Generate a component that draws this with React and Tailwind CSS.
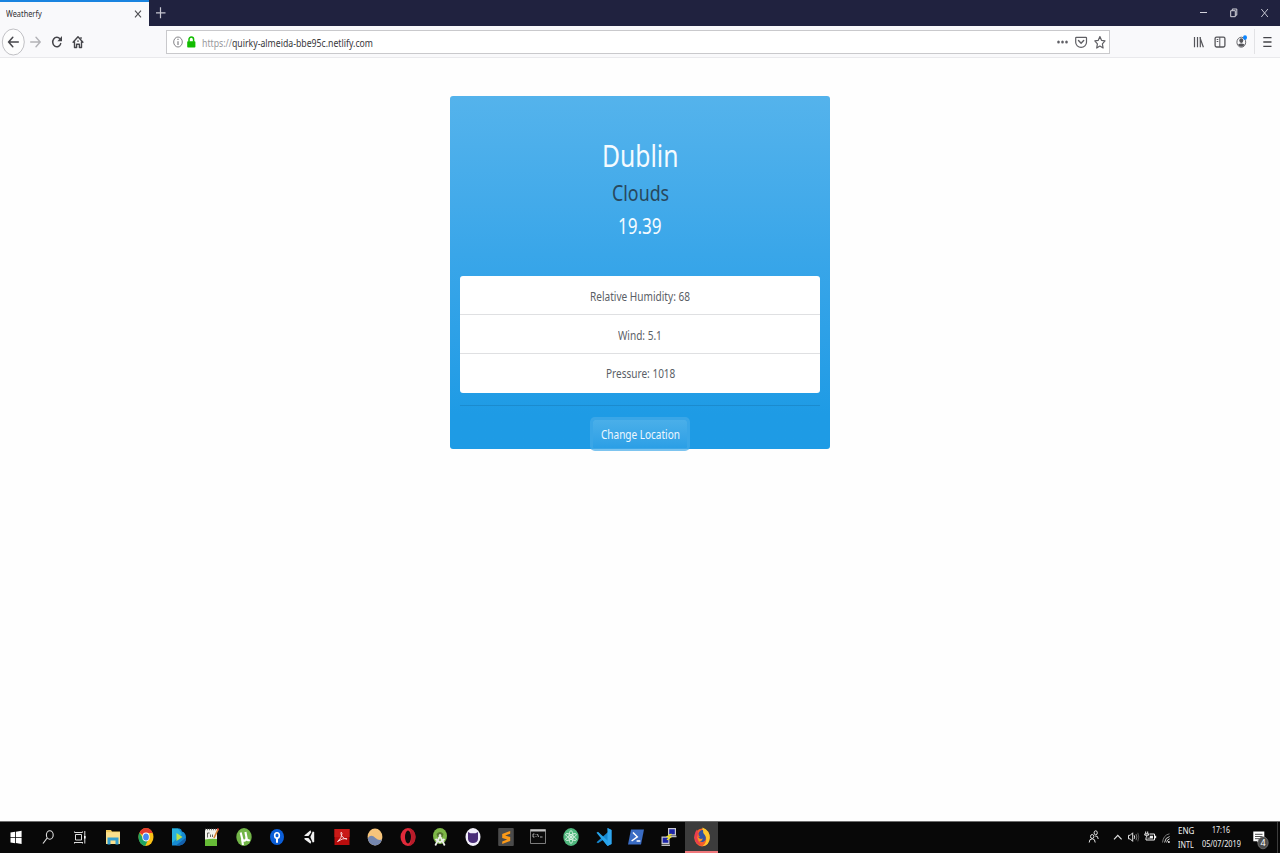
import { useLayoutEffect, useRef, useState } from "react";

/* Single line of text condensed horizontally to a given width. */
function Fit({ w, className = "", children }) {
  const ref = useRef(null);
  const [scale, setScale] = useState(1);
  useLayoutEffect(() => {
    setScale(w / ref.current.offsetWidth);
  }, [w]);
  return (
    <span className={"flex justify-start whitespace-nowrap " + className} style={{ width: w }}>
      <span ref={ref} className="inline-block shrink-0 origin-left" style={{ transform: `scaleX(${scale})` }}>
        {children}
      </span>
    </span>
  );
}

/* Chrome icon: 16x20 by default */
function Ico({ w = 16, h = 20, className = "", children }) {
  return (
    <svg width={w} height={h} viewBox={`0 0 ${w} ${h}`} fill="none" className={"block shrink-0 " + className}>
      {children}
    </svg>
  );
}

function TabStrip() {
  return (
    <div className="flex h-[26px] bg-[#20223f] text-white">
      <div className="flex w-[149px] items-center justify-between border-t-2 border-[#1a84e0] bg-[#f9f9fb] pl-[6px] pr-[7px]">
        <Fit w={36} className="text-[9px] leading-[22px] text-[#303034]">Weatherfy</Fit>
        <Ico w={8} h={10}>
          <path d="M1 1.6 7 8.4M7 1.6 1 8.4" stroke="#4c4c50" strokeWidth="1.1" />
        </Ico>
      </div>
      <Ico w={22} h={26}>
        <path d="M11.5 7.300v11M7 12.800h9.500" stroke="#c8c8d2" strokeWidth="1.2" />
      </Ico>
      <div className="flex-1" />
      <Ico w={92} h={26}>
        <path d="M12 12.5h7" stroke="#d4d4dc" strokeWidth="1" />
        <path d="M42.7 10.7h4.6v6h-4.6zM44.3 10.5V9h4.5v6.2h-1.4" stroke="#d4d4dc" strokeWidth="1" />
        <path d="m73.3 9 6.6 8M79.9 9l-6.6 8" stroke="#d4d4dc" strokeWidth=".9" />
      </Ico>
    </div>
  );
}

function Toolbar() {
  return (
    <div className="flex h-8 items-center border-b border-[#e9e9ec] bg-[#f9f9fb]">
      <Ico w={166} h={31}>
        <ellipse cx="13.3" cy="16" rx="11" ry="13" fill="#fdfdfd" stroke="#b9b9bd" strokeWidth=".9" />
        <path d="M18.3 16H8.8M12.8 11.2 8.6 16l4.2 4.8" stroke="#45454a" strokeWidth="1.5" strokeLinecap="round" />
        <path d="M30.7 16h9M36 11.2l4.2 4.8-4.2 4.8" stroke="#b2b2b6" strokeWidth="1.4" strokeLinecap="round" />
        <path d="M60 13a4.1 4.8 0 1 0 .7 4.6" stroke="#45454a" strokeWidth="1.5" strokeLinecap="round" />
        <path d="M62 10v5.3h-4.6z" fill="#45454a" />
        <path d="m73.1 16.3 4.9-5.6 4.9 5.6M74.5 15.5v6h2.1v-3.3h2.8v3.3h2.1v-6" stroke="#45454a" strokeWidth="1.4" strokeLinejoin="round" strokeLinecap="round" />
        <path d="M81 11v2M78 14.2v1.8" stroke="#45454a" strokeWidth="1.2" />
      </Ico>
      <div className="mt-px flex h-6 w-[944px] items-center border border-[#c9c9cc] bg-white">
        <Ico w={35} h={22}>
          <ellipse cx="11" cy="11" rx="4.3" ry="5" stroke="#76767a" strokeWidth=".9" />
          <path d="M11 10.2v3.7M11 7.8v1.3" stroke="#76767a" strokeWidth="1.1" />
          <rect x="20.2" y="10.2" width="8.2" height="6.3" rx=".8" fill="#12bc00" />
          <path d="M22 10.8V8.6a2.3 2.5 0 0 1 4.6 0v2.2" stroke="#12bc00" strokeWidth="1.5" />
        </Ico>
        <Fit w={171} className="mt-[2px] text-[11px] leading-[20px] text-[#37373b]">
          <span className="text-[#97979b]">https://</span>quirky-almeida-bbe95c.netlify.com
        </Fit>
        <div className="flex-1" />
        <Ico w={54} h={22}>
          <g fill="#5f5f64">
            <ellipse cx="3.500" cy="11" rx="1.3" ry="1.5" />
            <ellipse cx="7.500" cy="11" rx="1.3" ry="1.5" />
            <ellipse cx="11.500" cy="11" rx="1.3" ry="1.5" />
          </g>
          <path d="M21.400 6.3h9.4a.7.7 0 0 1 .7.7v4.2a5.4 5.2 0 0 1-10.8 0V7a.7.7 0 0 1 .7-.7Z" stroke="#5f5f64" strokeWidth="1.2" />
          <path d="m23.500 9.500 2.6 2.8 2.6-2.8" stroke="#5f5f64" strokeWidth="1.4" strokeLinecap="round" />
          <path d="m44.900 5.6 1.6 3.7 3.5.6-2.6 2.9.7 4.2-3.2-2-3.2 2 .7-4.2-2.6-2.9 3.5-.6z" stroke="#5f5f64" strokeWidth="1.2" strokeLinejoin="round" />
        </Ico>
      </div>
      <div className="flex-1" />
      <Ico w={90} h={31}>
        <path d="M4.5 11v10.3M7.5 11v10.3M10.3 11v10.3M9.8 11.3l3.6 10" stroke="#55555a" strokeWidth="1.2" />
        <rect x="25.1" y="11.2" width="9.8" height="9.8" rx="1.4" stroke="#55555a" strokeWidth="1.3" />
        <path d="M29.8 11v10M26.7 13.5h1.6M26.7 15.5h1.6" stroke="#55555a" strokeWidth="1" />
        <ellipse cx="51.3" cy="16.2" rx="4.4" ry="5" stroke="#6a6a6e" strokeWidth="1" />
        <ellipse cx="51.3" cy="14.6" rx="2" ry="2.3" fill="#55555a" />
        <path d="M48 18.4q3.3-2 6.6 0-1 2.4-3.3 2.4T48 18.4Z" fill="#55555a" />
        <ellipse cx="55" cy="11.6" rx="2" ry="2.3" fill="#0a84ff" />
        <path d="M64.5 3v25" stroke="#e2e2e5" />
        <path d="M73.3 11.7h8.2M73.3 16h8.2M73.3 20.3h8.2" stroke="#45454a" strokeWidth="1.3" />
      </Ico>
    </div>
  );
}

function WeatherCard() {
  return (
    <div className="mt-[38px] flex h-[353px] w-[380px] flex-col items-center rounded-[3px] bg-linear-to-b from-[#54b3ec] via-[#39a6e9] via-45% to-[#1e9be5] to-90% px-[10px]">
      <Fit w={76} className="mt-[40px] text-[30.500px] leading-[38px] text-[#f4fbff]">Dublin</Fit>
      <Fit w={57} className="mt-[4px] text-[22.5px] leading-[30px] text-[#28485d]">Clouds</Fit>
      <Fit w={44} className="mt-[3px] text-[22.5px] leading-[30px] text-[#f4fbff]">19.39</Fit>
      <div className="mt-[35px] flex w-full flex-col rounded-[3px] bg-white text-[12.8px] leading-[38px] text-[#5a6066]">
        <div className="flex h-[39px] justify-center border-b border-[#dfe0e2] pt-px"><Fit w={100}>Relative Humidity: 68</Fit></div>
        <div className="flex h-[39px] justify-center border-b border-[#dfe0e2] pt-px"><Fit w={44}>Wind: 5.1</Fit></div>
        <div className="flex h-[38.500px] justify-center"><Fit w={69}>Pressure: 1018</Fit></div>
      </div>
      <div className="mt-[12.500px] h-px w-full shrink-0 bg-[#1b8bce]" />
      <button className="mt-[14px] flex h-[28px] w-[94px] shrink-0 items-center justify-center rounded-[2px] bg-linear-to-b from-[#4aafe9] to-[#2b9fe6] ring-3 ring-[#46abe8]/70">
        <Fit w={79} className="-mt-px text-[12.8px] leading-[20px] text-[#eef8ff]">Change Location</Fit>
      </button>
    </div>
  );
}

const APPS = [
  <g key="explorer">
    <path d="M1 3h5l1 1.5h8V17H1z" fill="#f0c95c" />
    <path d="M1 5.200h14V17H1z" fill="#fbe08c" />
    <path d="M2.5 17.500v-7h11v7h-3V13.500h-5v4z" fill="#35a0d0" />
  </g>,
  <g key="chrome">
    <ellipse cx="8" cy="10" rx="7.5" ry="9" fill="#fbc116" />
    <path d="M8 10 1.4 5.7A7.5 9 0 0 1 14.8 6H8z" fill="#e33b2e" />
    <path d="M1.4 5.7A7.5 9 0 0 0 7.2 19L10.4 12 8 10 5 11z" fill="#1da462" />
    <ellipse cx="8" cy="10" rx="3.7" ry="4.4" fill="#fff" />
    <ellipse cx="8" cy="10" rx="2.9" ry="3.5" fill="#4688f1" />
  </g>,
  <g key="player">
    <path d="M1 1.5h7.500q2 .5 2.500 3 4 1 4 6.500-.5 6-6.500 7.500H1z" fill="#168bd2" />
    <path d="M1 1.5h6L11 7 1 16z" fill="#28b3dd" />
    <path d="m5 18.5 10-8q0 7-6.500 8z" fill="#1460ac" />
    <path d="m5.5 6 6 4-6 4z" fill="#b7e34b" />
  </g>,
  <g key="notepad">
    <path d="M2 2h12v17H2z" fill="#f1f1ea" />
    <path d="M2 12.500q6-1 12-.5v7H2z" fill="#67bc37" />
    <path d="M2 2.500h12" stroke="#777" strokeWidth="1.400" strokeDasharray="1 1" />
    <path d="M4.500 6v4.500M4.500 6h2M7.500 7.500v2.500M9.500 7.500v2.500" stroke="#42423e" strokeWidth=".8" />
    <path d="M15 2.500 11 11" stroke="#d98432" strokeWidth="1.700" />
    <path d="m15.400 1.500-.7 1.700" stroke="#d84635" strokeWidth="2" />
  </g>,
  <g key="utorrent">
    <ellipse cx="8" cy="10" rx="7.7" ry="9" fill="#72b548" />
    <path d="M4.7 5.5 6 11q.7 3.3 3 2.5 2-.8 1.3-4L9.4 5M10.5 11q.7 3 3.2 2M6 12l1 6" stroke="#fff" strokeWidth="2.1" />
  </g>,
  <g key="sourcetree">
    <ellipse cx="8" cy="10" rx="7" ry="8" fill="#0b5ed8" />
    <ellipse cx="8" cy="8.4" rx="2.3" ry="2.7" stroke="#fff" strokeWidth="1.6" />
    <path d="M8 11v4.8" stroke="#fff" strokeWidth="2" />
  </g>,
  <g key="unity">
    <path d="m3.500 8.300 6-5 .8 2L7.500 9H3.500zM3.500 11h4l2.800 3.800-.8 2-6-4.500zM11.700 4.500l1.500.5v10l-1.500.5L9.300 10z" fill="#f0f0f0" />
  </g>,
  <g key="acrobat">
    <path d="M.500 2h15v16H.500z" fill="#b90d0d" />
    <path d="M.500 2h15v8H.500z" fill="#c91a17" />
    <path d="M3.5 14.6Q8 11 8 6.4 7 4 6.9 6.5q.8 4.5 5.7 5.7 1.2-.2-.5-.8-3.5-.3-8.6 3.2Z" stroke="#f9dcdc" strokeWidth="1" />
  </g>,
  <g key="sphere">
    <ellipse cx="8" cy="10" rx="7.4" ry="8.4" fill="#f6c47b" />
    <path d="M.7 11.2Q4 6.5 8.5 11q3.4 3 6.6 1.3-1.6 6-7.1 6.1Q1.6 18 .7 11.2Z" fill="#7587af" />
  </g>,
  <g key="opera">
    <ellipse cx="8" cy="10" rx="7.500" ry="9" fill="#e02a3a" />
    <path d="M8 1q7.5.8 7.500 9T8 19q3.2-1 3.2-9T8 1Z" fill="#b81c2a" />
    <ellipse cx="8" cy="10" rx="3" ry="6.5" fill="#0b0b0b" />
  </g>,
  <g key="androidstudio">
    <ellipse cx="8" cy="9" rx="7" ry="8" fill="#7db747" />
    <path d="M4.500 7q3.500-4 7 0l-1 3h-5z" fill="#55752f" />
    <path d="M8 9 3.3 18.500M8 9l4.700 9.500M3.500 12l4.500 3.500 4.500-3.500" stroke="#eceeea" strokeWidth="1.7" />
    <ellipse cx="8" cy="8.5" rx="1.300" ry="1.500" fill="#e2e6de" />
  </g>,
  <g key="github">
    <ellipse cx="8" cy="10" rx="7.5" ry="9" fill="#f2effa" />
    <path d="m3 5 2.500 1.300h5L13 5v7q-.5 4-5 4t-5-4z" fill="#4a2d78" />
  </g>,
  <g key="sublime">
    <rect x=".2" y="1" width="15.600" height="18" rx="1" fill="#4b4b4b" />
    <path d="m12.200 4-8 3v4l5 1.500-5 2V17l8-3v-4l-5-1.500 5-1.700z" fill="#fb9a18" />
  </g>,
  <g key="cmd">
    <path d="M.5 2.500h15v14H.5z" fill="#0a0a0a" stroke="#8a8a8a" strokeWidth=".9" />
    <path d="M.5 3.500h15" stroke="#c2c2c2" strokeWidth="2" />
    <path d="M4.500 7H3v3h1.500M6 7v.8M6 9.200v.8M7.500 7l1 3M10 10h2.500" stroke="#d0d0d0" strokeWidth=".8" />
  </g>,
  <g key="atom">
    <ellipse cx="8" cy="10" rx="7.700" ry="9" fill="#4fb77d" />
    <g stroke="#e2f5e8" strokeWidth=".8">
      <ellipse cx="8" cy="10" rx="2" ry="6.500" />
      <ellipse cx="8" cy="10" rx="2" ry="6" transform="rotate(60 8 10)" />
      <ellipse cx="8" cy="10" rx="2" ry="6" transform="rotate(-60 8 10)" />
    </g>
    <circle cx="8" cy="10" r="1" fill="#fff" />
  </g>,
  <g key="vscode">
    <path d="m11.500 1 4 2v14l-4 2L7 13l-5 3.200-1.500-1L12 5z" fill="#1687cf" />
    <path d="M11.500 19 .5 5.800 2 4.700 12 14z" fill="#27a5ec" />
    <path d="m11.500 1 4 2v14l-4 2z" fill="#30a6ee" />
  </g>,
  <g key="powershell">
    <path d="M3 2.500h13L13 17.500H0z" fill="#3a6cc4" />
    <path d="m5 5.500 4.300 4.300L3.600 14M8.600 14h3.700" stroke="#fff" strokeWidth="1.500" />
  </g>,
  <g key="putty">
    <path d="M7 1h8v7.500H7zM.500 9.500h8v7.500h-8z" fill="#c9c9d0" />
    <path d="M8.200 2.200h5.600v5H8.200zM1.700 10.700h5.600v5H1.700z" fill="#1c25a8" />
    <path d="M8.500 9.500h7M.5 18.300H9" stroke="#b9b9c0" strokeWidth="1.500" />
    <path d="m10.500 7-4 2.500 3 .8-3.500 2.500" stroke="#f3e525" strokeWidth="1.300" />
  </g>,
  <g key="firefox">
    <ellipse cx="8" cy="10.500" rx="7.700" ry="9" fill="#f5602b" />
    <path d="M8.500.500q7.500 3 7.300 10.500-.5 7.500-7.300 8.300 4.500-3.300 3.500-9Q7.500 7 8.500.500Z" fill="#ffc62d" />
    <path d="M.800 7Q1.500 4 3 2.500l1 3Q1.500 13 7 18q-5.500-.8-6.600-7z" fill="#e83c50" />
    <path d="M4.500 6.500Q6 2.500 9 3q-.5 3 2 5.200 2.500 4.500-2 6.800-4.500.5-5-4l2.200-1.300q-1.700-.7-1.700-3.200Z" fill="#31539f" />
    <path d="M3 9q2 4 6 2.500-1.500 3.500-4.300 2.800Z" fill="#ff9b20" />
  </g>,
];

function Taskbar() {
  return (
    <div className="flex h-8 items-stretch border-t border-[#6d6d6d] bg-[#080808]">
      <Ico w={97} h={31}>
        <path d="m10.500 10.600 4.600-.8v5.200h-4.600zM15.900 9.700l5.700-1V15h-5.700zM10.500 15.800h4.600v5.500l-4.600-.8zM15.900 15.800h5.700v6.300l-5.700-1z" fill="#fff" />
        <ellipse cx="49.800" cy="13" rx="3.400" ry="4.200" stroke="#ddd" strokeWidth="1.100" />
        <path d="m47.200 16-4.200 5.500" stroke="#ddd" strokeWidth="1.200" />
        <path d="M75.500 12.500h6v5.500h-6zM74.500 10.500v-1M82.500 10.500v-1M74.500 10.500h8M74.500 20.500h8M74.500 20v1.500M82.500 20v1.500M84.800 9v12.500" stroke="#ddd" strokeWidth="1" />
        <path d="M84 14h1.600v2.500H84z" fill="#fff" />
      </Ico>
      <div className="flex w-[621px]">
        {APPS.map((icon, i) => (
          <div
            key={i}
            className={
              "flex flex-1 justify-center pt-[5px] " +
              (i === APPS.length - 1 ? "border-b-2 border-[#f0787c] bg-[#3c3c3c]" : "")
            }
          >
            <Ico>{icon}</Ico>
          </div>
        ))}
      </div>
      <div className="flex-1" />
      <Ico w={92} h={31}>
        <g stroke="#e2e2e2" strokeWidth="1">
          <ellipse cx="6.200" cy="14.500" rx="1.700" ry="2" />
          <path d="M3.200 20.500q0-3.700 3-3.700t3 3.700" />
          <ellipse cx="9.700" cy="10.800" rx="1.600" ry="2" />
          <path d="M9.200 14q3-.5 3 3" />
          <path d="m28 17.300 3.800-4 3.800 4" strokeWidth="1.200" />
          <path d="M42.500 13.300h1.700l2.500-2.500v8.600l-2.500-2.500h-1.700z" />
          <path d="M48.200 13.300q1 1.800 0 3.600" />
          <path d="M50 12q1.800 3 0 6.200" stroke="#777" />
          <path d="M51.800 10.800q2 4.300 0 8.600" stroke="#555" />
        </g>
        <path d="M63.500 12h5v6h-8.500v-2.500" stroke="#eee" strokeWidth="1" />
        <path d="M63.800 13.700h3.200v2.800h-5.500v-.8h2.300z" fill="#eee" />
        <path d="M69.600 13.700v2.600" stroke="#eee" strokeWidth="1.200" />
        <path d="M59.700 9.500v2M61.700 9.500v2M58.800 11.800h3.800v1.400h-3.800zM60.700 13.500v2" stroke="#eee" strokeWidth="1" />
        <path d="M76.500 20.500q.8-7.500 7-8.700" stroke="#777" strokeWidth="1" />
        <path d="M78.600 20.500q.5-5 5-6M80.600 20.500q.4-3 3-3.700" stroke="#ccc" strokeWidth="1" />
        <ellipse cx="82.900" cy="20" rx=".9" ry="1" fill="#fff" />
      </Ico>
      <div className="flex w-[23px] flex-col items-start pt-[2px] text-[9px] leading-[13.500px] text-[#f2f2f2]">
        <Fit w={16}>ENG</Fit>
        <Fit w={16}>INTL</Fit>
      </div>
      <div className="flex w-[40px] flex-col items-center pt-[1px] text-[9px] leading-[14px] text-[#f2f2f2]">
        <Fit w={18}>17:16</Fit>
        <Fit w={39}>05/07/2019</Fit>
      </div>
      <div className="relative w-[39px]">
        <Ico w={39} h={31}>
          <path d="M12.300 9.500h11v9.800h-4.800v2.900l-2.500-2.900h-3.700z" fill="#fff" />
          <path d="M14 12.300h7.500M14 14.500h7.500M14 16.700h5" stroke="#222" strokeWidth=".8" />
          <ellipse cx="22" cy="20.800" rx="5.200" ry="6" fill="#4c4c4c" stroke="#8a8a8a" strokeWidth=".6" />
          <path d="M36.500 0v31" stroke="#3c3c3c" />
        </Ico>
        <span className="absolute left-[19.500px] top-[15px] text-[9px] leading-[12px] text-white">4</span>
      </div>
    </div>
  );
}

export default function App() {
  return (
    <div className="flex h-[853px] w-[1280px] flex-col overflow-hidden bg-[#fefefe] font-['Noto_Sans','Open_Sans',sans-serif]">
      <TabStrip />
      <Toolbar />
      <main className="flex flex-1 flex-col items-center">
        <WeatherCard />
      </main>
      <Taskbar />
    </div>
  );
}
